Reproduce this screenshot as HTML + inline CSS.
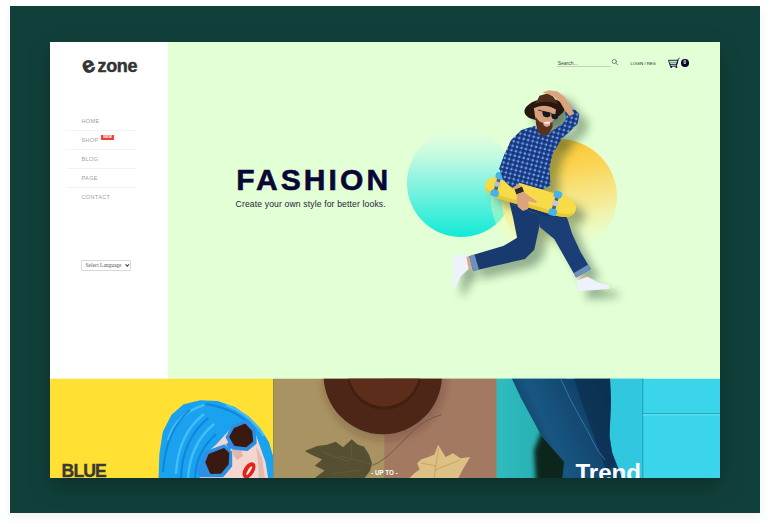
<!DOCTYPE html>
<html lang="en">
<head>
<meta charset="utf-8">
<title>Ezone - Fashion</title>
<style>
*{box-sizing:border-box;margin:0;padding:0}
html,body{width:770px;height:527px;overflow:hidden;background:#fff;font-family:"Liberation Sans",sans-serif}
.abs{position:absolute}
#frame{position:absolute;left:10px;top:6px;width:750px;height:507px;background:#11403a;box-shadow:0 4px 9px rgba(0,0,0,.06)}
#panel{position:absolute;left:50px;top:42px;width:670px;height:436px;box-shadow:0 9px 20px rgba(0,0,0,.26)}
#side{position:absolute;left:0;top:0;width:118px;height:337px;background:#fff}
#main{position:absolute;left:118px;top:0;width:552px;height:337px;background:#e3ffd5}
#art{position:absolute;left:0;top:0;width:770px;height:527px}
.logo{position:absolute;left:81px;top:55px;height:22px;color:#333;font-weight:bold;white-space:nowrap}
.logo .e{position:absolute;left:1.5px;top:-1.4px;font-size:22.6px;line-height:22px;transform:rotate(-24deg);transform-origin:6.8px 14px;-webkit-text-stroke:.6px #333}
.logo .z{position:absolute;left:16.5px;top:-.5px;font-size:18px;line-height:22px;letter-spacing:-.35px;-webkit-text-stroke:.45px #333}
.nav{position:absolute;left:66px;top:112px;width:70px;list-style:none}
.nav li{position:relative;height:18.9px;border-bottom:1px solid #f3f3f3;padding-left:15.5px;font-size:5.6px;line-height:18px;color:#a0a0a0;letter-spacing:.3px;white-space:nowrap}
.nav li:last-child{border-bottom:0}
.new{position:absolute;left:35.2px;top:4.1px;width:13px;height:4.7px;background:#ea4335;color:#fff;font-size:3.6px;line-height:4.7px;text-align:center;letter-spacing:.1px;font-weight:bold;overflow:hidden}
.lang{position:absolute;left:81px;top:260px;width:50px;height:11px;border:1px solid #d9d9d9;border-radius:1px;background:#fff;font-family:"Liberation Serif",serif;font-size:5.4px;line-height:9.6px;color:#555;padding-left:3.6px;white-space:nowrap}
.lang i{position:absolute;right:1.8px;top:2.2px;width:2.6px;height:2.6px;border-right:.8px solid #333;border-bottom:.8px solid #333;transform:rotate(45deg)}
.search{position:absolute;left:557px;top:58px;width:54px;height:9px;border-bottom:1px solid #c3d3bb;font-size:5px;line-height:10px;color:#444;padding-left:.7px}
.login{position:absolute;left:630.5px;top:58.9px;font-size:4.1px;line-height:10px;color:#1a1a2a;letter-spacing:.02px;white-space:nowrap}
.badge{position:absolute;left:681px;top:59.4px;width:7.6px;height:7.6px;border-radius:50%;background:#07052e;color:#fff;font-size:4.5px;line-height:7.6px;text-align:center;font-weight:bold}
h1{position:absolute;left:236.2px;top:162.5px;font-size:30px;line-height:34px;font-weight:bold;color:#0a0736;letter-spacing:3.1px;white-space:nowrap;-webkit-text-stroke:.6px #0a0736}
.sub{position:absolute;left:235.6px;top:197.5px;font-size:8.6px;line-height:12px;color:#1d1b3a;white-space:nowrap;letter-spacing:.14px}
.b1{position:absolute;left:61.6px;top:460.8px;font-size:17.6px;line-height:20px;font-weight:bold;color:#3a3936;letter-spacing:-.9px;-webkit-text-stroke:.35px #3a3936}
.b2{position:absolute;left:369px;top:468px;width:31px;text-align:center;font-size:6.3px;line-height:9px;font-weight:bold;color:#fff;white-space:nowrap}
.b3{position:absolute;left:575.4px;top:459.6px;font-size:24.1px;line-height:26px;font-weight:bold;color:#fff;white-space:nowrap;height:18.4px;overflow:hidden}
</style>
</head>
<body>
<div id="frame"></div>
<div id="panel"><div id="side"></div><div id="main"></div></div>
<svg id="art" viewBox="0 0 770 527">
<!--ART-->
<defs>
<clipPath id="c1"><rect x="50" y="378.7" width="223.4" height="99.3"/></clipPath>
<clipPath id="c2"><rect x="273.4" y="378.7" width="223.4" height="99.3"/></clipPath>
<clipPath id="c3"><rect x="496.8" y="378.7" width="223.2" height="99.3"/></clipPath>
<linearGradient id="gt" x1="0" y1="0" x2="0" y2="1"><stop offset="0" stop-color="#e6ffe2" stop-opacity=".45"/><stop offset=".38" stop-color="#a4f6e1"/><stop offset="1" stop-color="#12ead6"/></linearGradient>
<linearGradient id="gy" x1=".4" y1="0" x2=".6" y2="1"><stop offset="0" stop-color="#fcc42c"/><stop offset=".3" stop-color="#fbd557"/><stop offset=".62" stop-color="#f7e88e" stop-opacity=".85"/><stop offset="1" stop-color="#f0ffc0" stop-opacity="0"/></linearGradient><clipPath id="cw"><rect x="470" y="196" width="52" height="70"/></clipPath>
<pattern id="plaid" width="4.6" height="4.6" patternUnits="userSpaceOnUse" patternTransform="rotate(14)"><rect width="4.6" height="4.6" fill="#66a6ee"/><rect width="2.6" height="4.6" fill="#132c74" fill-opacity=".78"/><rect width="4.6" height="2.6" fill="#132c74" fill-opacity=".78"/></pattern>
<filter id="bl" x="-20%" y="-20%" width="140%" height="140%"><feGaussianBlur stdDeviation="4"/></filter>
<linearGradient id="gj" gradientUnits="userSpaceOnUse" x1="520" y1="440" x2="610" y2="400"><stop offset="0" stop-color="#103a5c"/><stop offset=".3" stop-color="#185682"/><stop offset=".65" stop-color="#134872"/><stop offset="1" stop-color="#0d3457"/></linearGradient><filter id="bl2" x="-40%" y="-40%" width="180%" height="180%"><feGaussianBlur stdDeviation="2.2"/></filter>
<linearGradient id="gl" x1="0" y1="0" x2="1" y2="0"><stop offset="0" stop-color="#2fbcc0"/><stop offset=".6" stop-color="#29b0b3"/><stop offset="1" stop-color="#22a0a2"/></linearGradient>
<g id="man">
<path d="M533,108 L538,95 Q548,90 559,95 L563,107 Z"/>
<ellipse cx="544.6" cy="109.6" rx="20.3" ry="10.6" transform="rotate(-7 544.6 109.6)"/>
<path d="M535,108 L560,110 559,120.5 552.6,129.9 547.4,136.1 541,135 537,128.8 535,118.4Z"/>
<path d="M563.9,96.4 L568.5,103.2 574.2,108.9 579.3,114 577.6,123.7 568.5,132.8 562,138.2 551.6,140.3 550.5,132 553.7,129.4 562.8,123.7 566.2,118 560.5,102.1Z"/>
<path d="M543.2,94.4 L548.5,91.3 556.8,90.8 563,94.4 566.2,100.7 562,99.6 556.8,96.5 546.4,97.5Z"/>
<path d="M521.3,129.9 L535,125.7 542.2,135.1 552.6,133 562,138.2 552.6,153.9 549.5,168.5 550.5,185.2 542.2,189.4 517.1,183.1 502.5,176.9 499.4,168.5 504.6,153.9 510.9,140.3Z"/>
<path transform="translate(530.5 197.2) rotate(16.5)" d="M-47,0 C-47,-7 -41,-10.5 -27,-10.5 L27,-10.5 C41,-10.5 47,-7 47,0 C47,7 41,10.5 27,10.5 L-27,10.5 C-41,10.5 -47,7 -47,0Z"/>
<path d="M509.6,203.2 L513.1,217.8 517.1,237.8 503.8,245.7 474.5,254.5 468.7,256.4 473.2,271 493.1,266.2 525,259 534.3,249.7 538.9,228.5 541,215.2Z"/>
<path d="M538.3,213.8 L567.6,219.2 572.1,233.8 580.8,252.4 590.7,268.9 576.1,277.6 564.9,257.7 554.3,239.1 539.7,227.1Z"/>
<path d="M454.6,254.5 L466,255 468.7,268.9 460.7,276.3 455.4,288.3 452,285.6 452.8,265.7Z"/>
<path d="M576.9,280.3 L587.5,276.8 599.4,282.9 609.5,285.1 609,289.1 578.2,291.2Z"/>
</g>
</defs>

<!-- hero circles -->
<circle cx="461" cy="183" r="54" fill="url(#gt)"/>
<circle cx="559" cy="197" r="58" fill="url(#gy)"/>
<circle cx="559" cy="197" r="68.5" fill="#f6ffb4" fill-opacity=".38" clip-path="url(#cw)"/>

<!-- man shadow -->
<use href="#man" transform="translate(9,8)" fill="#1f3d28" fill-opacity=".4" filter="url(#bl)"/>

<!-- man -->
<g>
<!-- back leg -->
<path d="M509.6,203.2 L513.1,217.8 517.1,237.8 503.8,245.7 474.5,254.5 468.7,256.4 473.2,271 493.1,266.2 525,259 534.3,249.7 538.9,228.5 541,215.2Z" fill="#193a6f"/>
<path d="M468.7,256.4 L474.5,254.5 479,269.6 473.2,271Z" fill="#6f8fbe"/>
<!-- front leg -->
<path d="M538.3,213.8 L567.6,219.2 572.1,233.8 580.8,252.4 590.7,268.9 576.1,277.6 564.9,257.7 554.3,239.1 539.7,227.1Z" fill="#1b3e76"/>
<path d="M573.6,273.2 L588.2,264.6 590.7,268.9 576.1,277.6Z" fill="#6f8fbe"/>
<path d="M509.6,203.2 L541,215.2 567.6,219.2 560,206 512,196Z" fill="#183567"/>
<!-- ankles -->
<path d="M464.5,257 L469,256.5 472,268 468,270Z" fill="#d9a98a"/>
<path d="M578,279 L586,275.5 588.5,278.5 580,282Z" fill="#d9a98a"/>
<!-- shoes -->
<path d="M454.6,254.5 L466,255 468.7,268.9 460.7,276.3 455.4,288.3 452,285.6 452.8,265.7Z" fill="#eef2fa"/>
<path d="M576.9,280.3 L587.5,276.8 599.4,282.9 609.5,285.1 609,289.1 578.2,291.2Z" fill="#eef2fa"/>
<!-- torso -->
<path d="M521.3,129.9 L535,125.7 542.2,135.1 552.6,133 562,138.2 552.6,153.9 549.5,168.5 550.5,185.2 542.2,189.4 517.1,183.1 502.5,176.9 499.4,168.5 504.6,153.9 510.9,140.3Z" fill="url(#plaid)"/>
<!-- raised arm -->
<path d="M565.1,111.7 L574.2,108.9 579.3,114 577.6,123.7 568.5,132.8 562,138.2 551.6,140.3 550.5,132 553.7,129.4 562.8,123.7 566.2,118Z" fill="url(#plaid)"/>
<!-- hat -->
<ellipse cx="544.6" cy="109.6" rx="20.3" ry="10.6" transform="rotate(-7 544.6 109.6)" fill="#27170f"/>
<path d="M534.5,104 L537.2,100.4 539.5,95.8 548,93.2 553.1,96.4 555.5,100 558,104 Q546,99.5 534.5,104Z" fill="#4f2e1c"/>
<!-- face -->
<path d="M533.8,107.8 L541.2,104.9 549.1,105.5 556,109.5 554.8,118 551.4,122.6 543.5,124.8 535.5,119.1Z" fill="#d9a07c"/>
<path d="M533,108.6 Q544,102.5 557,109.8 L557.5,107 Q545,99.5 532.5,105.5Z" fill="#27170f"/>
<path d="M535.5,116.9 L539.5,121.6 543.5,123.3 552.6,122.4 552.6,127.1 549.1,133.9 543.5,136.2 538.3,132.8 536.1,124.8Z" fill="#59321f"/>
<path d="M543,121.6 L550.6,121 550,125.4 546.5,127 543.6,125.2Z" fill="#e8a595"/>
<path d="M544,122.2 L550,121.8 549.6,123.4 544.6,123.8Z" fill="#fff5f0"/>
<path d="M542.6,110.8 L550.2,112.4 550.4,116 547.6,117.4 543.6,116.4 542.4,113.6Z" fill="#161821"/>
<path d="M551.6,113.4 L558.2,114.8 558,118 555.6,119.4 552.2,118.6 551.2,116Z" fill="#161821"/>
<path d="M538,110 L542.6,111.2 M550.2,113 L551.6,113.6" stroke="#161821" stroke-width=".8"/>
<!-- hand on hat -->
<path d="M543.5,92.4 L549.1,90.7 557.1,91.8 563.9,96.4 568.5,103.2 573.6,113.5 569.6,115.7 565.1,110 560.5,102.1 553.7,95.8 549.1,94.1Z" fill="#dca47e" stroke="#dca47e" stroke-width=".8" stroke-linejoin="round"/>
<!-- skateboard -->
<g transform="translate(530.5 197.2) rotate(16.5)">
<path d="M-47,0 C-47,-7 -41,-10.5 -27,-10.5 L27,-10.5 C41,-10.5 47,-7 47,0 C47,7 41,10.5 27,10.5 L-27,10.5 C-41,10.5 -47,7 -47,0Z" fill="#f7dc48"/>
<path d="M-46,2 C-44,8 -40,10.5 -27,10.5 L27,10.5 C40,10.5 45,7 46.5,2 C42,6 36,7 27,7 L-27,7 C-38,7 -43,6 -46,2Z" fill="#e2c033" fill-opacity=".8"/>
<rect x="-37.3" y="-9" width="3.6" height="13" rx="1" fill="#59626c"/>
<rect x="-38.5" y="-5.5" width="6" height="5" rx="1" fill="#b9c2cc"/>
<rect x="23.7" y="-7.5" width="3.6" height="13" rx="1" fill="#59626c"/>
<rect x="22.5" y="-4" width="6" height="5.5" rx="1" fill="#c3cbd4"/>
<rect x="-39.7" y="-15.2" width="8.4" height="7" rx="2.6" fill="#45b4ec"/>
<rect x="-39.7" y="2.8" width="8.4" height="7" rx="2.6" fill="#45b4ec"/>
<rect x="21.3" y="-13.8" width="8.4" height="7" rx="2.6" fill="#45b4ec"/>
<rect x="21.3" y="4.6" width="8.4" height="7" rx="2.6" fill="#45b4ec"/>
</g>
<!-- left forearm + hand -->
<path d="M499.4,168.5 L504.6,153.9 515,160 514,172 519,184 512.5,188.5 503,180Z" fill="url(#plaid)"/>
<path d="M514.5,189.5 L522,186.5 524,191.5 516.5,194.5Z" fill="#2b2b2f"/>
<path d="M513,187 L519.5,184.5 522,186.5 514.5,189.5Z" fill="#d9a07c"/>
<path d="M516.8,194.5 L524,191.8 529,196 537,201.2 536,203 528.5,201.5 528,209 523,211 518,207 516.5,200Z" fill="#dca47e"/>
</g>
<!-- banner 1 -->
<g clip-path="url(#c1)">
<rect x="50" y="378" width="224" height="101" fill="#ffe033"/>
<path d="M159.3,479 L160.1,454.1 163.5,432.1 172,415.3 183.8,405.1 200.6,400.9 217.5,401.8 234.4,407.7 247.9,416.9 259.7,428.8 268.2,442.3 273.2,459.2 274,479Z" fill="#1aa2ef" stroke="#1aa2ef" stroke-width="1.5" stroke-linejoin="round"/>
<path d="M168,440 Q176,414 204,405 M176,474 Q178,434 204,414 M188,478 Q190,444 214,424 M226,405 Q250,414 264,436" stroke="#55c6ff" stroke-width="2.4" fill="none" stroke-opacity=".75"/>
<path d="M163,472 Q166,430 190,410 M181,478 Q182,440 208,418 M195,478 Q196,452 216,434 M206,404 Q232,408 250,424" stroke="#0a7bd3" stroke-width="2.2" fill="none" stroke-opacity=".7"/>
<path d="M199.8,479 L200.6,469.3 208.2,451.6 216.7,444 226,433.8 232.7,426.2 247.1,420.3 253.8,428.8 259.7,445.6 265.7,462.5 268.2,479Z" fill="#f2d6cf"/>
<path d="M232,450 L240,447 243,456 237,460 234,456Z" fill="#d9a79b" fill-opacity=".7"/>
<path d="M256,446 L262,458 265,479 259,479 258,462Z" fill="#d7a79d" fill-opacity=".6"/>
<!-- glasses -->
<path d="M198.1,469.3 L205.7,452.4 224.3,445.6 231,452.4 231,465.9 222.6,476 200.6,476Z" fill="#2c8fe6" stroke="#2c8fe6" stroke-width="2.4" stroke-linejoin="round"/>
<path d="M226.8,437.2 L232.7,426.2 247.1,420.3 254.7,429.6 255.5,443.1 247.1,449.9 232.7,448.2Z" fill="#2c8fe6" stroke="#2c8fe6" stroke-width="2.4" stroke-linejoin="round"/>
<path d="M206.6,462.3 L209.6,455 223.8,449.4 228,453.4 227.4,464 220.4,472.4 211.2,472.6Z" fill="#3a1a10" stroke="#3a1a10" stroke-width="2.6" stroke-linejoin="round"/>
<path d="M230.6,437 L235,429 245,425 251,431.6 251.8,441 245.8,446 235,444.6Z" fill="#3a1a10" stroke="#3a1a10" stroke-width="2.6" stroke-linejoin="round"/>
<path d="M226,444 L231,441 234,447 229,450Z" fill="#2c8fe6"/>
<ellipse cx="249" cy="470.3" rx="5.2" ry="9" transform="rotate(32 249 470.3)" fill="#e3221a"/>
<ellipse cx="249.2" cy="470.6" rx="1.3" ry="5" transform="rotate(32 249.2 470.6)" fill="#fbeeea"/>
</g>
<!-- banner 2 -->
<g clip-path="url(#c2)">
<rect x="273" y="378" width="224" height="101" fill="#aa9362"/>
<rect x="384.3" y="378" width="113" height="101" fill="#a37962"/>
<circle cx="384.5" cy="379" r="61" fill="#3a2418" fill-opacity=".25" filter="url(#bl)"/>
<circle cx="382.75" cy="375" r="59.2" fill="#4e2617"/>
<circle cx="384" cy="373" r="37" fill="#3a1a0f" fill-opacity=".55"/>
<circle cx="384" cy="371" r="35.5" fill="#5c2d1a"/>
<path d="M441.7,414.8 Q424,418 404,440 T371.6,465.6" stroke="#6a5636" stroke-width=".8" fill="none"/>
<path d="M304.8,450.9 L317.2,445.9 327,444.7 335.7,441.7 343.1,447.2 351.7,439.3 357.9,444.7 364.1,446.7 369,454.6 372,463.2 370.2,470.6 364,479 313.5,479 324.6,470.6 314.7,465.7 322.1,459.5 311,454.6Z" fill="#565032"/>
<path d="M371,464 L340,456 M352,459 L351,444 M350,462 L322,452 M362,470 L330,474" stroke="#6f6840" stroke-width=".6" fill="none" stroke-opacity=".8"/>
<path d="M438.1,444.7 L434.4,454.6 428.3,457 420.9,459.5 417.2,463.2 419.6,469.4 414.7,473.1 408.5,479 457.9,479 462.8,469.4 470.2,457 460.4,458.3 453,453.3 445.6,457 441.9,450.9Z" fill="#dcc084"/>
<path d="M438.5,448 L434,479 M435,470 L460,460 M436,466 L421,463" stroke="#bb9a58" stroke-width=".7" fill="none"/>
</g>
<!-- banner 3 -->
<g clip-path="url(#c3)">
<rect x="496" y="378" width="225" height="101" fill="#3ad4eb"/>
<rect x="496" y="378" width="70" height="101" fill="url(#gl)"/>
<rect x="608" y="378" width="35" height="101" fill="#31c8df"/>
<rect x="642.3" y="378" width="1" height="101" fill="#1f9fb6"/>
<rect x="643" y="413.2" width="78" height="1" fill="#1f9fb6"/>
<rect x="643" y="414.2" width="78" height="1.2" fill="#5fe4f5"/>
<path d="M543,428 L568,462 565,484 536,484 534,450Z" fill="#08261a" filter="url(#bl2)"/>
<path d="M511.6,378 L610,378 611,401.4 609.5,436 612,452 622.5,479 562.2,479 564.2,461.8 541.8,436.4 521,398Z" fill="url(#gj)"/>
<path d="M574,378 L610,378 611,401.4 609.5,436 612,452 616,465 606,470 597.3,446.2 579.8,397.5Z" fill="#0b2f50" fill-opacity=".7"/>
<path d="M560.3,378 Q570,400 579.8,417 T593.4,442.3 605,459.8" stroke="#4a86b4" stroke-width=".9" fill="none" stroke-opacity=".8"/>
</g>
<!-- header icons -->
<g fill="none" stroke="#5d6470" stroke-width=".75" stroke-linecap="round">
<circle cx="614.3" cy="61.5" r="2.1"/><path d="M615.9,63.1 L617.7,64.9"/>
</g>
<g fill="none" stroke="#0c0a3a" stroke-width=".9" stroke-linecap="round" stroke-linejoin="round">
<path d="M668.9,60.3 H677.9 L676.9,64.3 H670.2 Z"/>
<path d="M679.3,58.2 L678.2,59 L676.2,66.2 H670.3 L670,64.3"/>
<path d="M670.2,62.3 H677.3" stroke-width=".5"/>
</g>
<circle cx="671.2" cy="67" r=".95" fill="#0c0a3a"/><circle cx="676.4" cy="67" r=".95" fill="#0c0a3a"/>

<!--/ART-->
</svg>
<div class="logo"><span class="e">e</span><span class="z">zone</span></div>
<ul class="nav">
<li>HOME</li>
<li>SHOP <span class="new">NEW</span></li>
<li>BLOG</li>
<li>PAGE</li>
<li>CONTACT</li>
</ul>
<div class="lang">Select Language<i></i></div>
<div class="search">Search...</div>
<div class="login">LOGIN / REG</div>
<div class="badge">0</div>
<h1>FASHION</h1>
<p class="sub">Create your own style for better looks.</p>
<div class="b1">BLUE</div>
<div class="b2">- UP TO -</div>
<div class="b3">Trend</div>
</body>
</html>
